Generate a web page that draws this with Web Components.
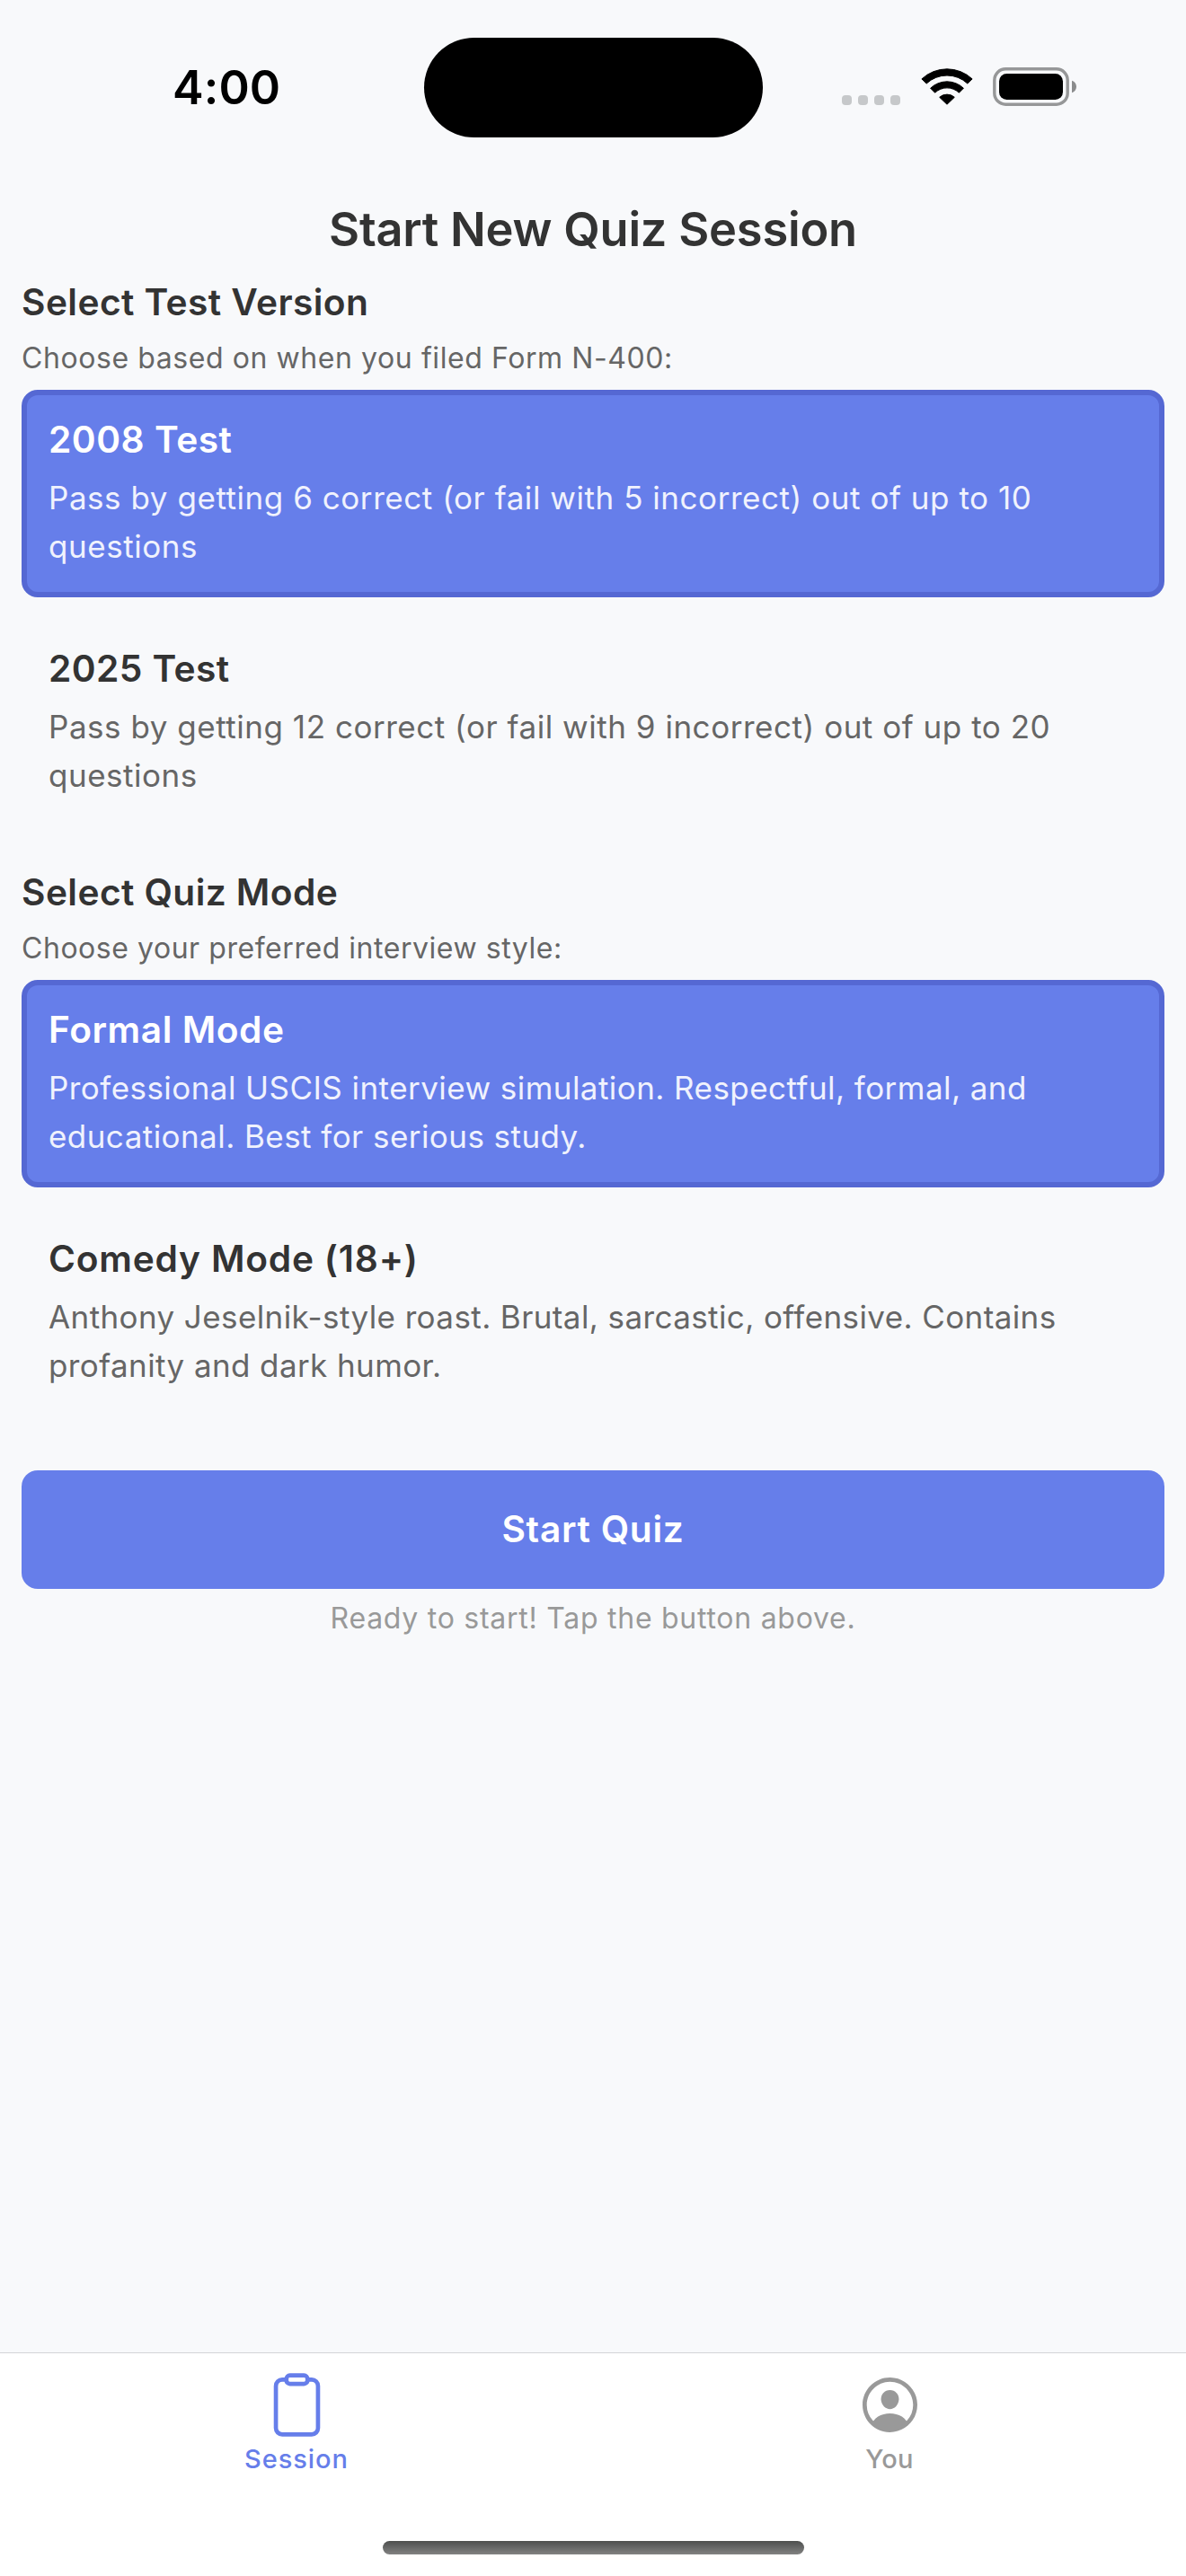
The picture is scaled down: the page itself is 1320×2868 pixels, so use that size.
<!DOCTYPE html>
<html lang="en">
<head>
<meta charset="utf-8">
<title>Start New Quiz Session</title>
<style>
  html, body { margin: 0; padding: 0; }
  body { width: 1320px; height: 2868px; overflow: hidden; background: #f8f9fb; font-family: Inter, "Liberation Sans", sans-serif; }
</style>
</head>
<body>
<quiz-app>
  <status-bar slot="status" time="4:00"></status-bar>
  <screen-title slot="title">Start New Quiz Session</screen-title>
  <option-group heading="Select Test Version" hint="Choose based on when you filed Form N-400:" style="--hint-ls:.577px">
    <option-card selected label="2008 Test" style="--label-ls:.52px;--desc-ls:.545px">Pass by getting 6 correct (or fail with 5 incorrect) out of up to 10 questions</option-card>
    <option-card label="2025 Test" style="--label-ls:.4px;--desc-ls:.527px">Pass by getting 12 correct (or fail with 9 incorrect) out of up to 20 questions</option-card>
  </option-group>
  <option-group heading="Select Quiz Mode" hint="Choose your preferred interview style:" style="--hint-ls:.543px">
    <option-card selected label="Formal Mode" style="--label-ls:.55px;--desc-ls:.445px">Professional USCIS interview simulation. Respectful, formal, and educational. Best for serious study.</option-card>
    <option-card label="Comedy Mode (18+)" style="--label-ls:.79px;--desc-ls:.4px">Anthony Jeselnik-style roast. Brutal, sarcastic, offensive. Contains profanity and dark humor.</option-card>
  </option-group>
  <start-action slot="action" note="Ready to start! Tap the button above.">Start Quiz</start-action>
  <tab-bar slot="tabs">
    <tab-item active icon="clipboard" style="--tab-ls:.93px">Session</tab-item>
    <tab-item icon="person" style="--tab-ls:.3px">You</tab-item>
  </tab-bar>
</quiz-app>
<script>
const define = (name, render) => customElements.define(name, class extends HTMLElement {
  constructor() {
    super();
    this.attachShadow({ mode: 'open' }).innerHTML = render(this);
  }
});

define('quiz-app', () => `
  <style>
    :host { display: flex; flex-direction: column; width: 1320px; height: 2868px; }
    main { flex: 1; display: flex; flex-direction: column; padding: 0 24px; }
    .groups { display: flex; flex-direction: column; gap: 44px; margin: 19px 0 60px; }
  </style>
  <slot name="status"></slot>
  <main>
    <slot name="title"></slot>
    <div class="groups"><slot></slot></div>
    <slot name="action"></slot>
  </main>
  <slot name="tabs"></slot>`);

define('status-bar', el => `
  <style>
    :host { display: grid; grid-template-columns: 471px 378px 471px; height: 222px; align-items: start; }
    .time { padding: 65px 0 0 192px; font-size: 52px; font-weight: 600; line-height: 66px; letter-spacing: .1px; color: #000; }
    .island { margin: 41.5px .5px 0; height: 111px; border-radius: 56px; background: #000; }
    .icons { display: flex; align-items: flex-end; height: 43px; margin: 75px 0 0 88px; }
    svg { display: block; }
    .dots { display: flex; gap: 7px; margin-bottom: 1px; }
    .dots i { width: 11px; height: 11px; border-radius: 4px; background: #c6c8ca; }
    .wifi { margin: 0 22px 1px 23px; }
  </style>
  <div class="time">${el.getAttribute('time')}</div>
  <div class="island"></div>
  <div class="icons">
    <div class="dots"><i></i><i></i><i></i><i></i></div>
    <svg class="wifi" width="58" height="42" viewBox="-29 -42 58 42">
      <g stroke="#000" stroke-width="1" stroke-linejoin="round">
        <path d="M-28.1-29.1A41.2 41.2 0 0 1 28.1-29.1L22.8-24A33.4 33.4 0 0 0-22.8-24Z"/>
        <path d="M-18.4-18.8A26.7 26.7 0 0 1 18.4-18.8L13.4-13.8A19.5 19.5 0 0 0-13.4-13.8Z"/>
        <path d="M-8.3-8.7A12.4 12.4 0 0 1 8.3-8.7L0-.8Z"/>
      </g>
    </svg>
    <svg width="94" height="43" viewBox="0 0 94 43">
      <rect x="1.8" y="1.8" width="81.4" height="39.4" rx="12.4" fill="none" stroke="#969798" stroke-width="3.4"/>
      <rect x="7" y="7" width="71" height="29" rx="8.5" fill="#000"/>
      <path d="M88 14.7c3 1 5 3.7 5 6.8s-2 5.800-5 6.800z" fill="#8b8c8d"/>
    </svg>
  </div>`);

define('screen-title', () => `
  <style>
    :host { display: block; text-align: center; font-size: 52.4px; font-weight: 600; line-height: 66px; letter-spacing: -.23px; color: #333; }
  </style>
  <slot></slot>`);

define('option-group', el => `
  <style>
    :host { display: flex; flex-direction: column; }
    h2 { margin: 0 0 8px; font-size: 40.7px; font-weight: 600; line-height: 60px; letter-spacing: .42px; color: #333; }
    p { margin: 0 0 11px; font-size: 32px; line-height: 48px; letter-spacing: var(--hint-ls); color: #666; }
    .cards { display: flex; flex-direction: column; gap: 24px; }
  </style>
  <h2>${el.getAttribute('heading')}</h2>
  <p>${el.getAttribute('hint')}</p>
  <div class="cards"><slot></slot></div>`);

define('option-card', el => `
  <style>
    :host { display: flex; flex-direction: column; gap: 10px; box-sizing: border-box; height: 231px; padding: 23px 24px 24px;
            border: 6px solid transparent; border-radius: 18px; color: #666; }
    :host([selected]) { background: #667eea; border-color: #5568d3; color: #f0f2fd; }
    .label { font-size: 40.7px; font-weight: 600; line-height: 54px; letter-spacing: var(--label-ls); color: #333; }
    :host([selected]) .label { color: #fff; }
    .desc { font-size: 35px; line-height: 54px; letter-spacing: var(--desc-ls); }
  </style>
  <div class="label">${el.getAttribute('label')}</div>
  <div class="desc"><slot></slot></div>`);

define('start-action', el => `
  <style>
    :host { display: flex; flex-direction: column; gap: 9px; }
    button { height: 132px; border: 0; border-radius: 18px; padding: 0 0 1px; background: #667eea; color: #fff;
             font: 600 40.7px/54px Inter, "Liberation Sans", sans-serif; letter-spacing: .72px; }
    p { margin: 0; text-align: center; font-size: 32px; line-height: 48px; letter-spacing: .737px; color: #999; }
  </style>
  <button><slot></slot></button>
  <p>${el.getAttribute('note')}</p>`);

define('tab-bar', () => `
  <style>
    :host { display: flex; flex-direction: column; justify-content: space-between; align-items: center; box-sizing: border-box;
            height: 249px; padding-bottom: 24px; border-top: 1px solid #d4d5d8; background: #fff; }
    nav { display: grid; grid-template-columns: 1fr 1fr; width: 100%; }
    .home { width: 469px; height: 15px; border-radius: 8px; background: linear-gradient(#4d4f4e, #828282); }
  </style>
  <nav><slot></slot></nav>
  <div class="home"></div>`);

const ICONS = {
  clipboard: `<g fill="none" stroke="currentColor" stroke-width="32" stroke-linejoin="round">
      <path d="M336 64h32a48 48 0 0 1 48 48v320a48 48 0 0 1-48 48H144a48 48 0 0 1-48-48V112a48 48 0 0 1 48-48h32"/>
      <rect x="176" y="32" width="160" height="64" rx="26.13"/></g>`,
  person: `<g fill="currentColor">
      <path d="M258.9 48C141.92 46.42 46.42 141.92 48 258.9c1.56 112.19 92.91 203.54 205.1 205.1 117 1.6 212.48-93.9 210.88-210.88C462.44 140.91 371.09 49.56 258.9 48zm126.42 327.25a4 4 0 0 1-6.14-.32 124.27 124.27 0 0 0-32.35-29.59C321.37 329 289.11 320 256 320s-65.37 9-90.83 25.34a124.24 124.24 0 0 0-32.35 29.58 4 4 0 0 1-6.14.32A175.32 175.32 0 0 1 80 259c-1.63-97.31 78.22-178.76 175.57-179S432 158.81 432 256a175.32 175.32 0 0 1-46.68 119.25z"/>
      <path d="M256 144c-19.72 0-37.55 7.39-50.22 20.82s-19 32-17.57 51.93C191.11 256 221.52 288 256 288s64.83-32 67.79-71.24c1.48-19.74-4.8-38.14-17.68-51.82C293.39 151.44 275.59 144 256 144z"/></g>`
};

define('tab-item', el => `
  <style>
    :host { display: flex; flex-direction: column; align-items: center; padding-top: 20px; color: #999;
            font-size: 29px; font-weight: 500; line-height: 36px; letter-spacing: var(--tab-ls); }
    :host([active]) { color: #667eea; }
    svg { display: block; width: 75px; height: 75px; margin-bottom: 5px; }
  </style>
  <svg viewBox="0 0 512 512">${ICONS[el.getAttribute('icon')]}</svg>
  <span><slot></slot></span>`);
</script>
</body>
</html>
